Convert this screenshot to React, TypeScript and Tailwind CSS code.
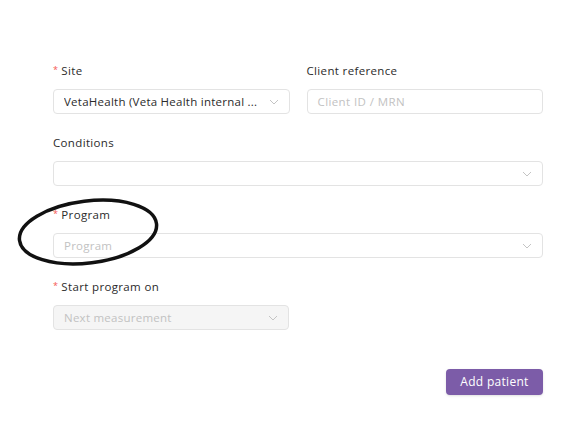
import React from "react";

const Chevron = () => (
  <svg width="10" height="6" viewBox="0 0 10 6" fill="none" className="shrink-0">
    <path d="M1 1l4 4 4-4" stroke="#c4c4c4" strokeWidth="1" />
  </svg>
);

const Label = ({ children, required }: { children: React.ReactNode; required?: boolean }) => (
  <div className="h-[22px] flex items-center text-[11.5px] tracking-[0.35px] text-[#2b2b2b] mb-[7px]">
    {required && <span className="text-[#f5574f] mr-[3px] text-[9px] -mt-[2px]">*</span>}
    {children}
  </div>
);

const Select = ({
  value,
  placeholder,
  disabled,
}: {
  value?: string;
  placeholder?: string;
  disabled?: boolean;
}) => (
  <div
    className={`h-[25px] rounded-[4px] border border-[#e3e3e3] flex items-center justify-between pl-[10px] pr-[10px] text-[11.5px] tracking-[0.25px] ${
      disabled ? "bg-[#f5f5f5]" : "bg-white"
    }`}
  >
    <span className={`truncate ${value ? "text-[#2b2b2b]" : "text-[#c2c2c2]"}`}>{value ?? placeholder ?? "\u00a0"}</span>
    <Chevron />
  </div>
);

export default function App() {
  return (
    <div
      className="relative w-[571px] h-[424px] bg-white"
      style={{ fontFamily: '"Open Sans", "Noto Sans", sans-serif' }}
    >
      <div className="pt-[60px] pl-[53px] pr-[28px] flex flex-col">
        <div className="grid grid-cols-2 gap-x-[17px] mb-[18px]">
          <div>
            <Label required>Site</Label>
            <Select value="VetaHealth (Veta Health internal ..." />
          </div>
          <div>
            <Label>Client reference</Label>
            <div className="h-[25px] rounded-[4px] border border-[#e3e3e3] flex items-center pl-[10px] text-[11.5px] tracking-[0.4px] text-[#c2c2c2]">
              Client ID / MRN
            </div>
          </div>
        </div>
        <div className="mb-[18px]">
          <Label>Conditions</Label>
          <Select />
        </div>
        <div className="mb-[18px]">
          <Label required>Program</Label>
          <Select placeholder="Program" />
        </div>
        <div className="w-[236px]">
          <Label required>Start program on</Label>
          <Select placeholder="Next measurement" disabled />
        </div>
        <div className="flex justify-end mt-[39px]">
          <button className="h-[26px] w-[97px] rounded-[4px] bg-[#7c5ca8] text-white text-[12px] tracking-[0.3px] shadow-sm">
            Add patient
          </button>
        </div>
      </div>
      <svg className="absolute left-0 top-0 pointer-events-none" width="571" height="424">
        <ellipse
          cx="88"
          cy="232"
          rx="69"
          ry="31"
          transform="rotate(-7 88 232)"
          fill="none"
          stroke="#111"
          strokeWidth="3.5"
        />
      </svg>
    </div>
  );
}
